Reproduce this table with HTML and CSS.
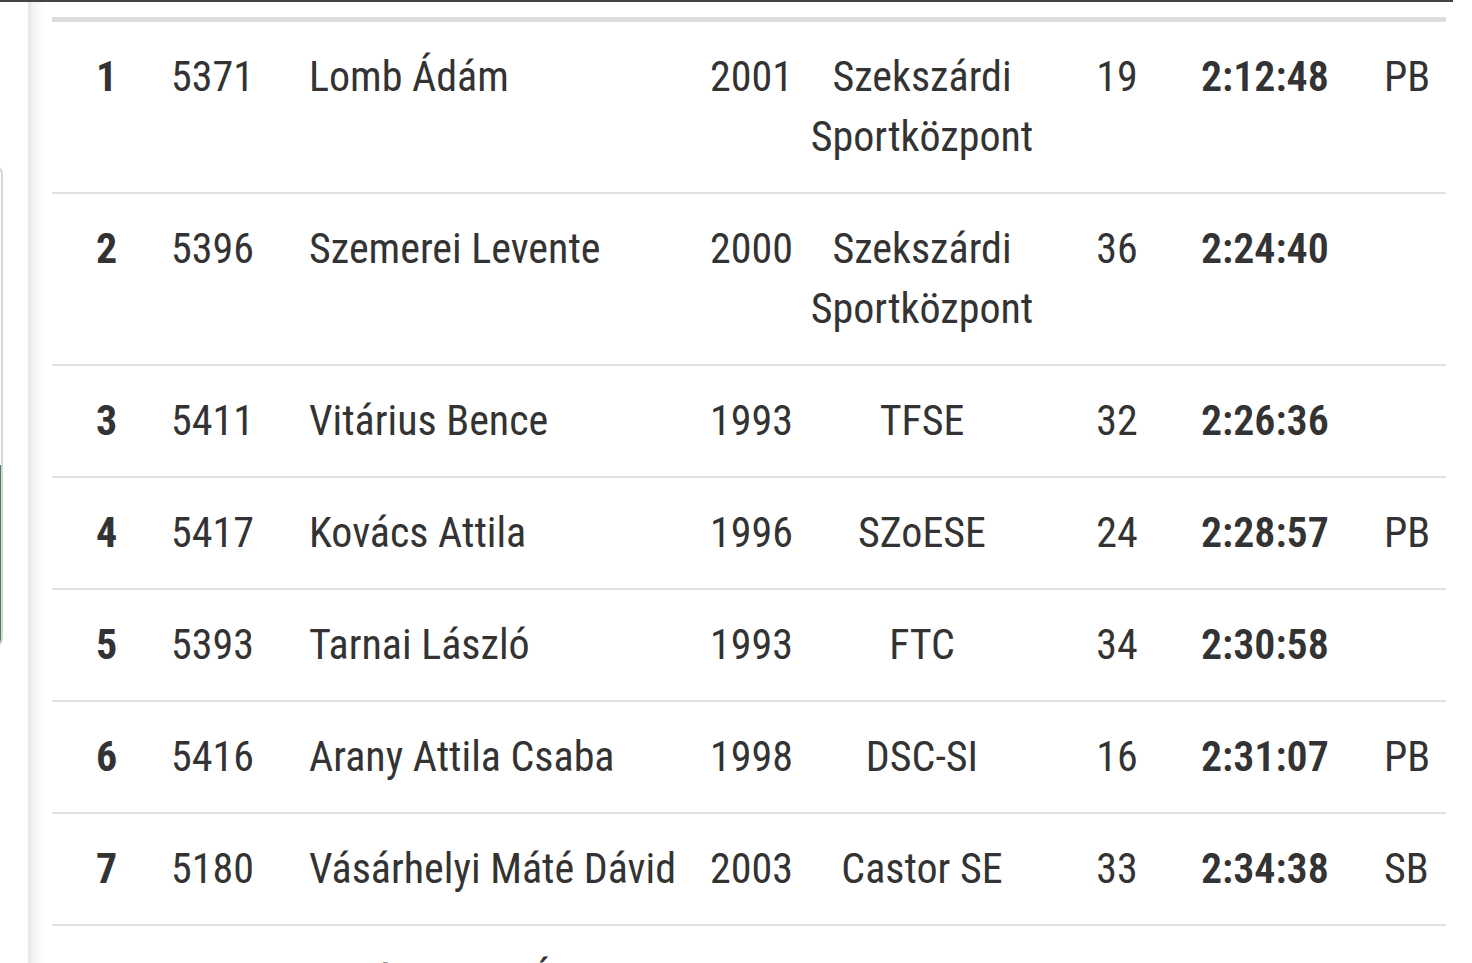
FILE: index.html
```html
<!DOCTYPE html>
<html lang="hu">
<head>
<meta charset="utf-8">
<title>Eredmények</title>
<link rel="stylesheet" href="styles.css">
</head>
<body>
<div class="topbar"></div>
<div class="page">
  <aside class="side">
    <div class="sidecard">
      <div class="sidecard-active"></div>
    </div>
  </aside>
  <main class="card">
    <table class="results">
      <colgroup>
        <col class="w-rank"><col class="w-bib"><col class="w-name"><col class="w-year"><col class="w-club"><col class="w-age"><col class="w-time"><col class="w-note">
      </colgroup>
      <tbody>
        <tr><td class="rank">1</td><td class="bib">5371</td><td class="name">Lomb Ádám</td><td class="year">2001</td><td class="club">Szekszárdi Sportközpont</td><td class="age">19</td><td class="time">2:12:48</td><td class="note">PB</td></tr>
        <tr><td class="rank">2</td><td class="bib">5396</td><td class="name">Szemerei Levente</td><td class="year">2000</td><td class="club">Szekszárdi Sportközpont</td><td class="age">36</td><td class="time">2:24:40</td><td class="note"></td></tr>
        <tr><td class="rank">3</td><td class="bib">5411</td><td class="name">Vitárius Bence</td><td class="year">1993</td><td class="club">TFSE</td><td class="age">32</td><td class="time">2:26:36</td><td class="note"></td></tr>
        <tr><td class="rank">4</td><td class="bib">5417</td><td class="name">Kovács Attila</td><td class="year">1996</td><td class="club">SZoESE</td><td class="age">24</td><td class="time">2:28:57</td><td class="note">PB</td></tr>
        <tr><td class="rank">5</td><td class="bib">5393</td><td class="name">Tarnai László</td><td class="year">1993</td><td class="club">FTC</td><td class="age">34</td><td class="time">2:30:58</td><td class="note"></td></tr>
        <tr><td class="rank">6</td><td class="bib">5416</td><td class="name">Arany Attila Csaba</td><td class="year">1998</td><td class="club">DSC-SI</td><td class="age">16</td><td class="time">2:31:07</td><td class="note">PB</td></tr>
        <tr><td class="rank">7</td><td class="bib">5180</td><td class="name">Vásárhelyi Máté Dávid</td><td class="year">2003</td><td class="club">Castor SE</td><td class="age">33</td><td class="time">2:34:38</td><td class="note">SB</td></tr>
        <tr><td class="rank">8</td><td class="bib">5402</td><td class="name">Bakó Botond Ákos</td><td class="year">1995</td><td class="club">BEAC</td><td class="age">25</td><td class="time">2:35:12</td><td class="note"></td></tr>
      </tbody>
    </table>
  </main>
</div>
</body>
</html>
```

FILE: styles.css
```css
* { box-sizing: border-box; }

html, body {
  margin: 0;
  padding: 0;
  background: #fff;
  height: 963px;
  overflow: hidden;
}

body {
  font-family: "Roboto Condensed", Roboto, "Liberation Sans", sans-serif;
  font-stretch: condensed;
  color: #333;
}

.topbar {
  width: 1453px;
  height: 2px;
  background: #444;
}

.page {
  display: flex;
  align-items: flex-start;
}

.side {
  width: 28px;
  flex: none;
  overflow: hidden;
  padding-top: 164px;
}

.sidecard {
  width: 24px;
  height: 481px;
  margin-left: -21px;
  border: 2px solid #d6d6d6;
  border-radius: 8px;
  display: flex;
  flex-direction: column;
  justify-content: flex-end;
  overflow: hidden;
}

.sidecard-active {
  height: 182px;
  margin-right: -2px;
  margin-bottom: -2px;
  border-right: 3px solid #3f8a55;
  border-bottom-right-radius: 8px;
}

.card {
  flex: none;
  width: 1425px;
  padding: 15px 7px 0 24px;
  background: linear-gradient(to right, #e6e6e6 0, #f4f4f4 6px, #fff 17px) no-repeat;
  min-height: 961px;
}

.results {
  width: 1394px;
  border-collapse: collapse;
  table-layout: fixed;
  border-top: 5px solid #dddddd;
  font-size: 42px;
  line-height: 60px;
}

.w-rank { width: 109px; }
.w-bib { width: 136px; }
.w-name { width: 401px; }
.w-year { width: 102px; }
.w-club { width: 244px; }
.w-age { width: 146px; }
.w-time { width: 150px; }
.w-note { width: 106px; }

.results tr {
  border-bottom: 2px solid #e0e0e0;
}

.results td {
  padding: 25px 12px 25px;
  vertical-align: top;
  white-space: normal;
}

.results .rank {
  text-align: center;
  font-weight: 700;
}

.results .bib,
.results .name,
.results .year {
  text-align: left;
  white-space: nowrap;
}

.results .bib { padding-left: 10px; }

.results .club {
  text-align: center;
  padding-left: 10px;
  padding-right: 10px;
}

.results .age { text-align: center; }

.results .time {
  text-align: left;
  font-weight: 600;
  padding-left: 11px;
}

.results .note {
  text-align: left;
  padding-left: 44px;
}
```
